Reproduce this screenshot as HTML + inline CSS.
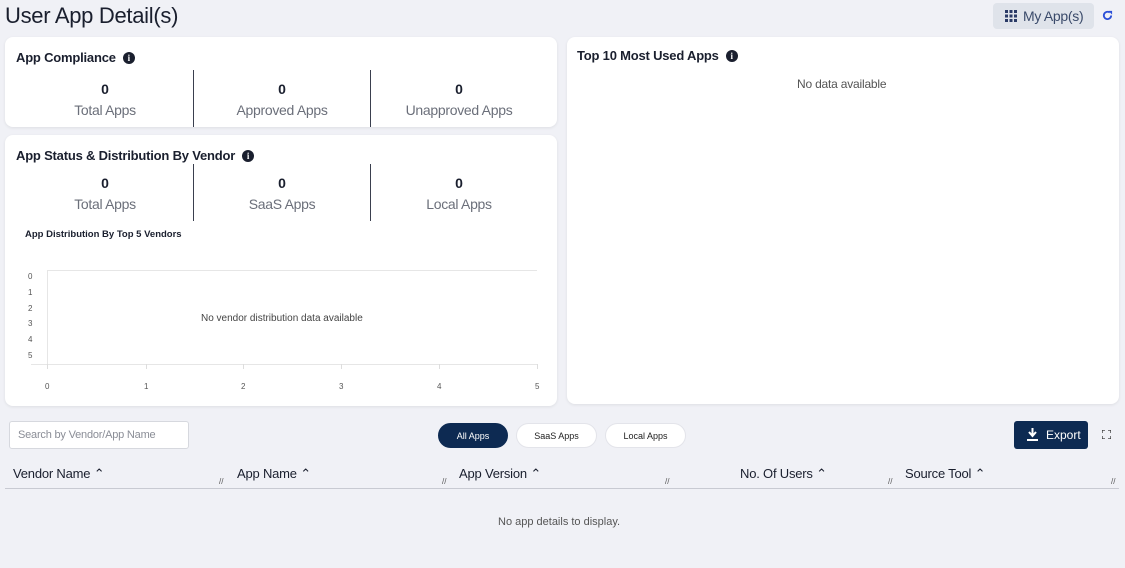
<!DOCTYPE html>
<html><head><meta charset="utf-8"><style>
*{box-sizing:border-box;margin:0;padding:0}
body{width:1125px;height:568px;background:#f0f1f6;font-family:"Liberation Sans",sans-serif;position:relative;overflow:hidden;color:#1a1f2e}
.a{position:absolute;white-space:nowrap}
.card{position:absolute;background:#fff;border-radius:8px;box-shadow:0 1px 3px rgba(0,0,0,.08)}
.h{font-weight:bold;font-size:13px;color:#1a1f2e;letter-spacing:-.2px}
.info{display:inline-block;width:12px;height:12px;border-radius:50%;background:#1a1f2e;color:#fff;font-size:9px;text-align:center;line-height:12px;font-weight:bold;font-family:"Liberation Serif",serif;vertical-align:1px;margin-left:7px}
.num{font-weight:bold;font-size:14px;text-align:center;width:176px}
.lbl{font-size:14px;color:#6b6f7a;text-align:center;width:176px;letter-spacing:-.3px}
.vl{position:absolute;width:1px;background:#3a3f4e}
.yl{font-size:8px;color:#555}
.tk{position:absolute;width:1px;height:5px;background:#ddd;top:364px}
.pill{position:absolute;height:25px;border-radius:13px;font-size:9px;text-align:center;line-height:25px;background:#fff;border:1px solid #e3e4ea;color:#222}
.th{font-size:13px;color:#1a1f2e;letter-spacing:-.2px}
.rz{font-size:8px;color:#555}
</style></head><body>
<div class="a" style="left:5px;top:3px;font-size:22px;color:#1a1f2e;letter-spacing:-.3px">User App Detail(s)</div>
<div class="a" style="left:993px;top:3px;width:101px;height:26px;background:#dfe3ea;border-radius:4px;font-size:14px;color:#3a4a6a;line-height:26px;padding-left:30px;letter-spacing:-.3px">My App(s)</div>
<svg class="a" style="left:1005px;top:10px" width="12" height="12" viewBox="0 0 12 12" fill="#2a3a66"><rect x="0" y="0" width="3" height="3"/><rect x="4.5" y="0" width="3" height="3"/><rect x="9" y="0" width="3" height="3"/><rect x="0" y="4.5" width="3" height="3"/><rect x="4.5" y="4.5" width="3" height="3"/><rect x="9" y="4.5" width="3" height="3"/><rect x="0" y="9" width="3" height="3"/><rect x="4.5" y="9" width="3" height="3"/><rect x="9" y="9" width="3" height="3"/></svg>
<svg class="a" style="left:1102px;top:10px" width="11" height="11" viewBox="0 0 12 12"><path d="M10 6A4 4 0 1 1 8.5 2.8" fill="none" stroke="#2b4fd8" stroke-width="2"/><path d="M7 1h4v4z" fill="#2b4fd8"/></svg>

<div class="card" style="left:5px;top:37px;width:552px;height:90px"></div>
<div class="a h" style="left:16px;top:50px">App Compliance<span class="info">i</span></div>
<div class="vl" style="left:193px;top:70px;height:57px"></div>
<div class="vl" style="left:370px;top:70px;height:57px"></div>
<div class="a num" style="left:17px;top:81px">0</div><div class="a lbl" style="left:17px;top:102px">Total Apps</div>
<div class="a num" style="left:194px;top:81px">0</div><div class="a lbl" style="left:194px;top:102px">Approved Apps</div>
<div class="a num" style="left:371px;top:81px">0</div><div class="a lbl" style="left:371px;top:102px">Unapproved Apps</div>

<div class="card" style="left:5px;top:135px;width:552px;height:271px"></div>
<div class="a h" style="left:16px;top:148px">App Status &amp; Distribution By Vendor<span class="info">i</span></div>
<div class="vl" style="left:193px;top:164px;height:57px"></div>
<div class="vl" style="left:370px;top:164px;height:57px"></div>
<div class="a num" style="left:17px;top:175px">0</div><div class="a lbl" style="left:17px;top:196px">Total Apps</div>
<div class="a num" style="left:194px;top:175px">0</div><div class="a lbl" style="left:194px;top:196px">SaaS Apps</div>
<div class="a num" style="left:371px;top:175px">0</div><div class="a lbl" style="left:371px;top:196px">Local Apps</div>
<div class="a" style="left:25px;top:229px;font-size:9.5px;font-weight:bold">App Distribution By Top 5 Vendors</div>
<div class="a" style="left:47px;top:270px;width:490px;height:1px;background:#e6e6e6"></div>
<div class="a" style="left:47px;top:270px;width:1px;height:95px;background:#e6e6e6"></div>
<div class="a" style="left:31px;top:364px;width:506px;height:1px;background:#e6e6e6"></div>
<div class="tk" style="left:47px"></div><div class="tk" style="left:146px"></div><div class="tk" style="left:243px"></div><div class="tk" style="left:341px"></div><div class="tk" style="left:439px"></div><div class="tk" style="left:537px"></div>
<div class="a yl" style="left:28px;top:272px">0</div><div class="a yl" style="left:28px;top:288px">1</div><div class="a yl" style="left:28px;top:304px">2</div><div class="a yl" style="left:28px;top:319px">3</div><div class="a yl" style="left:28px;top:335px">4</div><div class="a yl" style="left:28px;top:351px">5</div>
<div class="a yl" style="left:45px;top:382px">0</div><div class="a yl" style="left:144px;top:382px">1</div><div class="a yl" style="left:241px;top:382px">2</div><div class="a yl" style="left:339px;top:382px">3</div><div class="a yl" style="left:437px;top:382px">4</div><div class="a yl" style="left:535px;top:382px">5</div>
<div class="a" style="left:201px;top:313px;font-size:10px;color:#444">No vendor distribution data available</div>

<div class="card" style="left:567px;top:37px;width:552px;height:367px"></div>
<div class="a h" style="left:577px;top:48px">Top 10 Most Used Apps<span class="info">i</span></div>
<div class="a" style="left:797px;top:77px;font-size:12px;color:#555;letter-spacing:-.2px">No data available</div>

<div class="a" style="left:9px;top:421px;width:180px;height:28px;background:#fff;border:1px solid #d6d8de;border-radius:3px;font-size:11px;color:#8a8d96;line-height:26px;padding-left:8px;letter-spacing:-.2px">Search by Vendor/App Name</div>
<div class="pill" style="left:438px;top:423px;width:70px;background:#0d2a52;color:#fff;border-color:#0d2a52">All Apps</div>
<div class="pill" style="left:516px;top:423px;width:81px">SaaS Apps</div>
<div class="pill" style="left:605px;top:423px;width:81px">Local Apps</div>
<div class="a" style="left:1014px;top:421px;width:74px;height:28px;background:#0d2a52;border-radius:3px;color:#fff;font-size:12px;line-height:28px;padding-left:32px">Export</div>
<svg class="a" style="left:1027px;top:428px" width="11" height="13" viewBox="0 0 11 13"><path d="M5.5 0v7M2 4l3.5 4L9 4" stroke="#fff" stroke-width="2" fill="none"/><rect x="0" y="11" width="11" height="2" fill="#fff"/></svg>
<svg class="a" style="left:1102px;top:430px" width="9" height="9" viewBox="0 0 9 9" fill="none" stroke="#333" stroke-width="1.3"><path d="M0 3V0h3M6 0h3v3M9 6v3H6M3 9H0V6"/></svg>

<div class="a th" style="left:13px;top:466px">Vendor Name ⌃</div>
<div class="a th" style="left:237px;top:466px">App Name ⌃</div>
<div class="a th" style="left:459px;top:466px">App Version ⌃</div>
<div class="a th" style="left:740px;top:466px">No. Of Users ⌃</div>
<div class="a th" style="left:905px;top:466px">Source Tool ⌃</div>
<div class="a rz" style="left:219px;top:477px">//</div><div class="a rz" style="left:442px;top:477px">//</div><div class="a rz" style="left:665px;top:477px">//</div><div class="a rz" style="left:888px;top:477px">//</div><div class="a rz" style="left:1111px;top:477px">//</div>
<div class="a" style="left:5px;top:488px;width:1114px;height:1px;background:#c8cad2"></div>
<div class="a" style="left:498px;top:516px;font-size:11px;color:#555">No app details to display.</div>
</body></html>
